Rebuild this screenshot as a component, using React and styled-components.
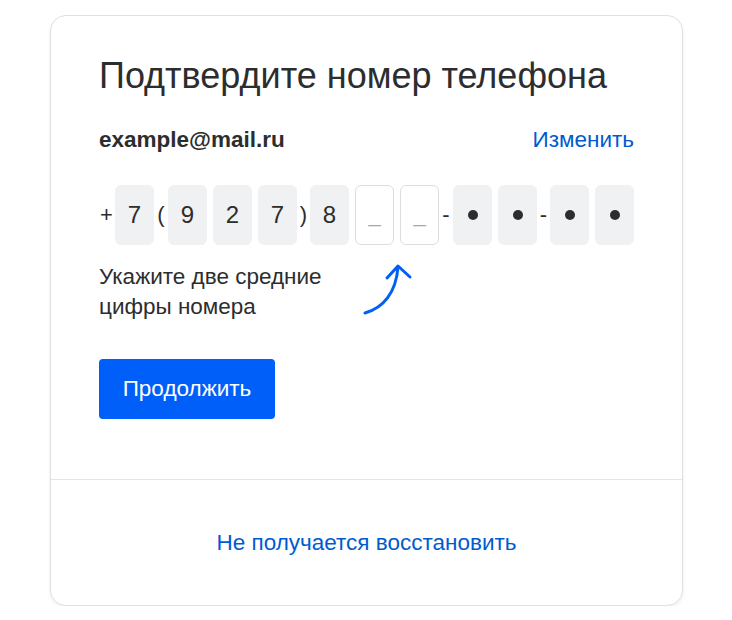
import React from 'react'
import styled, { createGlobalStyle } from 'styled-components'

const GlobalStyle = createGlobalStyle`
body {
  margin: 0;
  background: #ffffff;
  font-family: "Liberation Sans", Arial, sans-serif;
  color: #2c2d2e;
}
* { box-sizing: border-box; }
`;

const phone = [
    { sep: '+', width: 16 },
    { digit: '7' },
    { sep: '(', width: 14 },
    { digit: '9' },
    { digit: '2' },
    { digit: '7' },
    { sep: ')', width: 13 },
    { digit: '8' },
    { empty: true },
    { empty: true },
    { sep: '-', width: 14 },
    { masked: true },
    { masked: true },
    { sep: '-', width: 13 },
    { masked: true },
    { masked: true },
]

function ArrowUp() {
    return (
        <svg width="52" height="54" viewBox="0 0 52 54" fill="none">
            <path d="M3 50 C 21 45, 34 30, 36 4" stroke="#005ff9" strokeWidth="3" strokeLinecap="round" />
            <path d="M25 15 L36 3 L48 14" stroke="#005ff9" strokeWidth="3" strokeLinecap="round" strokeLinejoin="round" />
        </svg>
    )
}

class App extends React.Component {
    render() {
        return (
        <Page>
            <GlobalStyle />
            <Card>
                <Top>
                    <Title>Подтвердите номер телефона</Title>
                    <EmailRow>
                        <Email>example@mail.ru</Email>
                        <Link href="#">Изменить</Link>
                    </EmailRow>
                    <PhoneRow>
                        {phone.map((p, i) => {
                            if (p.sep) return <Sep key={i} w={p.width}>{p.sep}</Sep>
                            if (p.empty) return <Cell key={i} empty><Blank>_</Blank></Cell>
                            if (p.masked) return <Cell key={i}><Dot /></Cell>
                            return <Cell key={i}>{p.digit}</Cell>
                        })}
                    </PhoneRow>
                    <HintRow>
                        <Hint>Укажите две средние цифры номера</Hint>
                        <ArrowBox><ArrowUp /></ArrowBox>
                    </HintRow>
                    <Button>Продолжить</Button>
                </Top>
                <Bottom>
                    <Link href="#">Не получается восстановить</Link>
                </Bottom>
            </Card>
        </Page>
        )
    }
}

export default App

const Page = styled.div`
padding: 15px 0 0 50px;
`;

const Card = styled.div`
width: 633px;
border: 1px solid #dfe0e4;
border-radius: 16px;
background: #ffffff;
box-shadow: 0 2px 4px rgba(0, 0, 0, 0.06);
`;

const Top = styled.div`
padding: 40px 48px 60px 48px;
border-bottom: 1px solid #e4e5e8;
`;

const Title = styled.h1`
margin: 0;
font-size: 36px;
font-weight: normal;
line-height: 40px;
color: #2c2d2e;
`;

const EmailRow = styled.div`
display: flex;
justify-content: space-between;
align-items: center;
margin-top: 30px;
height: 28px;
`;

const Email = styled.span`
font-size: 22.5px;
font-weight: bold;
`;

const Link = styled.a`
font-size: 22.5px;
color: #005bd1;
text-decoration: none;
`;

const PhoneRow = styled.div`
display: flex;
align-items: center;
margin-top: 31px;
height: 60px;
`;

const Sep = styled.span`
width: ${p => p.w}px;
flex-shrink: 0;
font-size: 22px;
text-align: center;
color: #2c2d2e;
&:first-child { text-align: left; padding-left: 1px; }
`;

const Cell = styled.div`
flex: 1;
height: 60px;
display: flex;
align-items: center;
justify-content: center;
border-radius: 6px;
font-size: 24px;
color: #2c2d2e;
background: ${p => p.empty ? '#ffffff' : '#f0f1f3'};
border: 1px solid ${p => p.empty ? '#dcdde1' : '#f0f1f3'};
& + & { margin-left: 6px; }
`;

const Blank = styled.span`
font-size: 22px;
color: #a5a7ab;
position: relative;
top: 0px;
`;

const Dot = styled.span`
width: 10px;
height: 10px;
border-radius: 50%;
background: #2c2d2e;
`;

const HintRow = styled.div`
display: flex;
align-items: flex-start;
margin-top: 17px;
`;

const Hint = styled.p`
margin: 0;
width: 250px;
font-size: 22.5px;
line-height: 30px;
color: #2c2d2e;
`;

const ArrowBox = styled.div`
margin-left: 13px;
margin-top: 1px;
`;

const Button = styled.button`
display: block;
margin-top: 37px;
height: 60px;
width: 176px;
border: none;
border-radius: 4px;
background: #005ff9;
color: #ffffff;
font-family: inherit;
font-size: 22.5px;
cursor: pointer;
`;

const Bottom = styled.div`
height: 125px;
display: flex;
align-items: center;
justify-content: center;
`;
